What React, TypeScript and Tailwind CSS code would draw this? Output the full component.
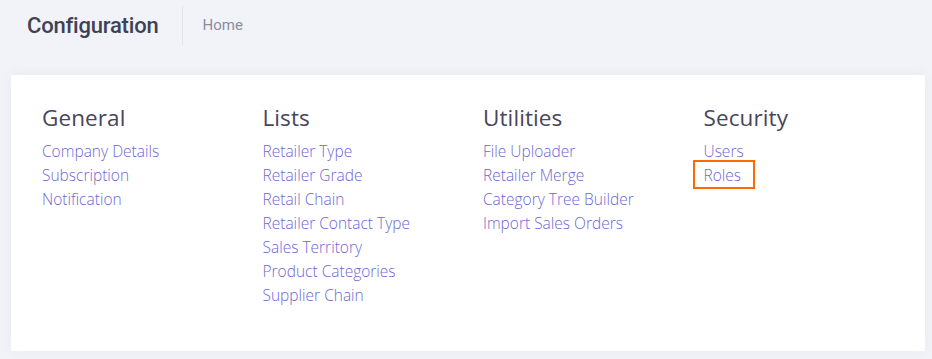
import React from "react";

const sections = [
  {
    title: "General",
    links: ["Company Details", "Subscription", "Notification"],
  },
  {
    title: "Lists",
    links: [
      "Retailer Type",
      "Retailer Grade",
      "Retail Chain",
      "Retailer Contact Type",
      "Sales Territory",
      "Product Categories",
      "Supplier Chain",
    ],
  },
  {
    title: "Utilities",
    links: [
      "File Uploader",
      "Retailer Merge",
      "Category Tree Builder",
      "Import Sales Orders",
    ],
  },
  {
    title: "Security",
    links: ["Users", "Roles"],
  },
];

const App = () => {
  return (
    <div className="min-h-screen w-[932px] h-[359px] bg-[#f2f3f8] font-['Open_Sans',sans-serif]">
      <div className="flex items-center h-[50px] pl-[27px]">
        <h1 className="text-[22px] font-medium text-[#3f4254] font-['Roboto',sans-serif] tracking-[-0.2px]">
          Configuration
        </h1>
        <div className="ml-[24px] mr-[19px] h-[39px] w-px bg-[#e2e4ec]"></div>
        <span className="text-[15px] text-[#8a8d9c] font-['Roboto',sans-serif]">
          Home
        </span>
      </div>

      <div className="mt-[25px] ml-[11px] w-[914px] h-[276px] bg-white shadow-[0_0_12px_rgba(82,63,105,0.06)] pl-[31px] pt-[29px]">
        <div className="flex">
          {sections.map((section) => (
            <div key={section.title} className="w-[220.5px]">
              <h2 className="text-[22.5px] leading-[28px] font-medium text-[#48465b] tracking-[0.1px]">
                {section.title}
              </h2>
              <ul className="mt-[7px]">
                {section.links.map((link) => (
                  <li key={link} className="relative h-[24px] leading-[24px]">
                    <a className="text-[15.5px] font-light text-[#6e67cf]">{link}</a>
                    {link === "Roles" && (
                      <span className="absolute left-[-11px] top-[-3px] w-[62px] h-[29px] border-2 border-[#ff6a00]"></span>
                    )}
                  </li>
                ))}
              </ul>
            </div>
          ))}
        </div>
      </div>
    </div>
  );
};

export default App;
